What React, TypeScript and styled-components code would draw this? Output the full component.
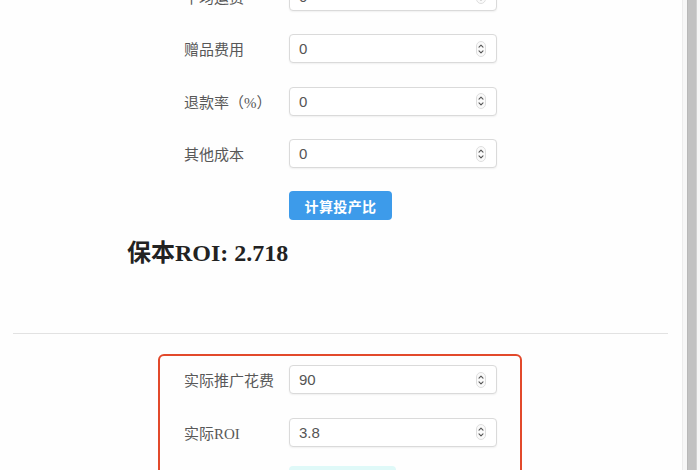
import React from "react";
import styled, { createGlobalStyle } from "styled-components";

const Global = createGlobalStyle`
  html, body { margin: 0; padding: 0; background: #fff; overflow: hidden; }
  body { width: 700px; height: 470px; }
`;

const Page = styled.div`
  display: flex;
  width: 700px;
  height: 470px;
  overflow: hidden;
  background: #fefefe;
`;

const Main = styled.div`
  width: 682px;
  display: flex;
  flex-direction: column;
  & > * {
    flex-shrink: 0;
  }
`;

const ScrollTrack = styled.div`
  width: 18px;
  height: 470px;
  display: flex;
  background: #f7f7f7;
  border-left: 1px solid #ececec;
  padding-left: 4px;
  box-sizing: border-box;
`;

const Thumb = styled.div`
  width: 10px;
  height: 100%;
  background: #c2c2c2;
  border-left: 1px solid #b8b8b8;
  border-right: 1px solid #d0d0d0;
  box-sizing: border-box;
`;

const Form = styled.div<{ $top: number }>`
  display: grid;
  grid-template-columns: 105px 208px;
  row-gap: 23.5px;
  align-items: center;
  width: 313px;
  margin: ${(p) => p.$top}px 0 0 184px;
`;

const Label = styled.div`
  font-family: "Liberation Serif", "Noto Sans CJK SC", serif;
  font-size: 15px;
  color: #585858;
  white-space: nowrap;
`;

const Field = styled.div`
  height: 29px;
  box-sizing: border-box;
  display: flex;
  align-items: center;
  border: 1px solid #dadada;
  border-radius: 4px;
  background: #fff;
  box-shadow: 0 1px 2px rgba(0, 0, 0, 0.06);
  padding: 0 10px 0 9px;
`;

const Input = styled.input`
  flex: 1;
  min-width: 0;
  border: none;
  outline: none;
  background: transparent;
  font-family: "Liberation Sans", Arial, sans-serif;
  font-size: 15px;
  color: #555;
  padding: 0;
`;

const ButtonRow = styled.div<{ $top: number }>`
  display: flex;
  width: 313px;
  margin: ${(p) => p.$top}px 0 0 184px;
  padding-left: 105px;
  box-sizing: border-box;
`;

const Button = styled.button<{ $light?: boolean }>`
  width: ${(p) => (p.$light ? 107 : 103)}px;
  height: 29px;
  border: none;
  border-radius: 4px;
  background: ${(p) => (p.$light ? "#dff9f8" : "#3d9bea")};
  color: #fff;
  font-family: "Noto Sans CJK SC", sans-serif;
  font-weight: 700;
  font-size: 14px;
  letter-spacing: 0.4px;
  padding: 0;
`;

const Heading = styled.h2`
  margin: 19px 0 0 127px;
  font-family: "Liberation Serif", "Noto Sans CJK SC", serif;
  font-weight: 700;
  font-size: 24px;
  line-height: 28px;
  color: #222;
`;

const Divider = styled.div`
  align-self: stretch;
  margin: 66px 14px 0 13px;
  height: 1px;
  background: #e2e2e2;
`;

const Highlight = styled.div`
  width: 364px;
  height: 140px;
  margin: 20px 0 0 158px;
  box-sizing: border-box;
  border: 2px solid #e2492b;
  border-radius: 6px;
  padding: 9px 0 0 24px;
  display: flex;
  flex-direction: column;
`;

const InnerForm = styled(Form)`
  margin: 0;
`;

const InnerButtonRow = styled(ButtonRow)`
  margin: 19px 0 0;
`;

const Spinner = () => (
  <svg width="10" height="16" viewBox="0 0 10 16" fill="none">
    <rect x="0.5" y="0.5" width="9" height="15" rx="4.5" stroke="#dedede" fill="#fafafa" />
    <path d="M3 6.2 L5 4.2 L7 6.2" stroke="#555" strokeWidth="1.1" strokeLinecap="round" strokeLinejoin="round" />
    <path d="M3 9.8 L5 11.8 L7 9.8" stroke="#555" strokeWidth="1.1" strokeLinecap="round" strokeLinejoin="round" />
  </svg>
);

const NumberField = ({ value }: { value: string }) => (
  <Field>
    <Input type="text" value={value} readOnly />
    <Spinner />
  </Field>
);

const topRows = [
  { label: "平均运费", value: "0" },
  { label: "赠品费用", value: "0" },
  { label: "退款率（%）", value: "0" },
  { label: "其他成本", value: "0" },
];

const bottomRows = [
  { label: "实际推广花费", value: "90" },
  { label: "实际ROI", value: "3.8" },
];

export default function App() {
  return (
    <>
      <Global />
      <Page>
        <Main>
          <Form $top={-18.5}>
            {topRows.map((r) => (
              <React.Fragment key={r.label}>
                <Label>{r.label}</Label>
                <NumberField value={r.value} />
              </React.Fragment>
            ))}
          </Form>
          <ButtonRow $top={23}>
            <Button>计算投产比</Button>
          </ButtonRow>
          <Heading>保本ROI: 2.718</Heading>
          <Divider />
          <Highlight>
            <InnerForm $top={0}>
              {bottomRows.map((r) => (
                <React.Fragment key={r.label}>
                  <Label>{r.label}</Label>
                  <NumberField value={r.value} />
                </React.Fragment>
              ))}
            </InnerForm>
            <InnerButtonRow $top={0}>
              <Button $light aria-label="计算实际投产比" />
            </InnerButtonRow>
          </Highlight>
        </Main>
        <ScrollTrack>
          <Thumb />
        </ScrollTrack>
      </Page>
    </>
  );
}
